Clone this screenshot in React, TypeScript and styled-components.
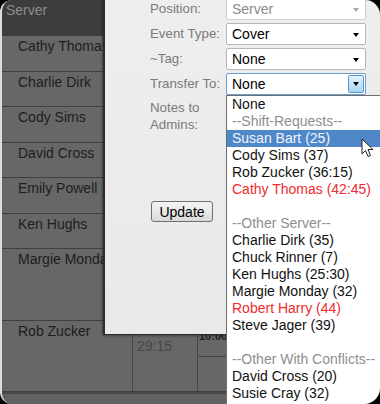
import React from "react";
import styled, { createGlobalStyle } from "styled-components";

const Global = createGlobalStyle`
  html, body { margin: 0; padding: 0; background: #000; }
  body { font-family: "Liberation Sans", Arial, sans-serif; }
  * { box-sizing: border-box; }
`;

const Frame = styled.div`
  position: relative;
  width: 380px;
  height: 404px;
  overflow: hidden;
  border-radius: 12px 15px 16px 12px;
  border-left: 2px solid #dedede;
  background: #676767;
  font-family: "Liberation Sans", Arial, sans-serif;
`;

const Table = styled.div`
  display: flex;
  flex-direction: column;
`;

const HeaderBar = styled.div`
  height: 36px;
  background: #3d3d3d;
  color: #8c8c8c;
  font-size: 14px;
  line-height: 18px;
  padding: 1px 4px;
`;

const Row = styled.div<{ $h: number }>`
  display: grid;
  grid-template-columns: 131px 65px 1fr;
  height: ${(p) => p.$h}px;
  border-bottom: 1px solid #3f3f3f;
`;

const NameCell = styled.div`
  padding: 1px 0 0 16px;
  font-size: 14px;
  line-height: 18px;
  color: #1d1d1d;
  white-space: nowrap;
  overflow: hidden;
  border-right: 1px solid #464646;
`;

const HoursCell = styled.div`
  padding: 16px 0 0 4px;
  font-size: 14px;
  line-height: 18px;
  color: #474747;
  border-right: 1px solid #464646;
`;

const TimesCell = styled.div`
  display: flex;
  flex-direction: column;
`;

const TimeSlot = styled.div`
  flex: 1;
  font-size: 11px;
  font-weight: bold;
  line-height: 13px;
  color: #1f1f1f;
  padding: 9px 0 0 1px;
  border-bottom: 1px solid #464646;
  &:last-child { border-bottom: none; }
`;

const FooterRow = styled.div`
  height: 12px;
  border-top: 2px solid #4a4a4a;
  background: #626262;
`;

const Modal = styled.div`
  position: absolute;
  left: 101px;
  top: 0;
  width: 300px;
  height: 335px;
  background: linear-gradient(180deg, #eeeeee 0%, #e9e9e9 100%);
  border-left: 2px solid #2c2c2c;
  border-bottom: 1px solid #2c2c2c;
  box-shadow: -1px 1px 2px rgba(0, 0, 0, 0.35);
  padding-left: 45px;
`;

const Form = styled.div`
  display: grid;
  grid-template-columns: 76px 140px;
  grid-template-rows: repeat(4, 25px) 101px;
  align-items: center;
  margin-top: -4px;
`;

const Label = styled.div`
  font-size: 13.3px;
  line-height: 17px;
  color: #7a7a7a;
  white-space: nowrap;
`;

const NotesLabel = styled(Label)`
  align-self: start;
  padding-top: 3px;
`;

const NotesArea = styled.div`
  height: 101px;
`;

const SelectBox = styled.div<{ $disabled?: boolean; $focused?: boolean }>`
  position: relative;
  height: 22px;
  background: #fff;
  border: 1px solid
    ${(p) => (p.$focused ? "#6a9fd4" : p.$disabled ? "#d0d0d0" : "#b7b7b7")};
  border-radius: 2px;
  padding-left: 5px;
  font-size: 14px;
  line-height: 20px;
  color: ${(p) => (p.$disabled ? "#8a8a8a" : "#000")};
  display: flex;
  align-items: center;
`;

const Arrow = styled.span<{ $disabled?: boolean }>`
  position: absolute;
  right: 6px;
  top: 9px;
  width: 0;
  height: 0;
  border-left: 3.5px solid transparent;
  border-right: 3.5px solid transparent;
  border-top: 4px solid ${(p) => (p.$disabled ? "#a8a8a8" : "#000")};
`;

const ArrowButton = styled.span`
  position: absolute;
  right: 1px;
  top: 1px;
  bottom: 1px;
  width: 16px;
  border: 1px solid #5b94c9;
  border-radius: 2px;
  background: linear-gradient(180deg, #e6f3fc 0%, #c4e3f7 50%, #a9d5f2 100%);
  display: flex;
  align-items: center;
  justify-content: center;
  &::after {
    content: "";
    border-left: 3.5px solid transparent;
    border-right: 3.5px solid transparent;
    border-top: 4px solid #000;
  }
`;

const ButtonRow = styled.div`
  margin-top: 4px;
  padding-left: 1px;
`;

const UpdateButton = styled.button`
  height: 21px;
  width: 62px;
  padding: 0;
  font-family: "Liberation Sans", Arial, sans-serif;
  font-size: 14px;
  color: #000;
  border: 1px solid #707070;
  border-radius: 3px;
  background: linear-gradient(180deg, #f4f4f4 0%, #e9e9e9 50%, #d9d9d9 100%);
`;

const ListBox = styled.div`
  position: absolute;
  left: 224px;
  top: 95px;
  width: 170px;
  height: 330px;
  background: #fff;
  border: 1px solid #6e6e6e;
  display: flex;
  flex-direction: column;
`;

const Option = styled.div<{ $kind?: "group" | "red" | "selected" }>`
  height: 17px;
  line-height: 17px;
  font-size: 14px;
  padding-left: 5px;
  white-space: nowrap;
  color: ${(p) =>
    p.$kind === "group"
      ? "#8e8e8e"
      : p.$kind === "red"
      ? "#ee2b2f"
      : p.$kind === "selected"
      ? "#f2f6fc"
      : "#111"};
  background: ${(p) => (p.$kind === "selected" ? "#4f88c9" : "transparent")};
`;

const Cursor = styled.svg`
  position: absolute;
  left: 359px;
  top: 138px;
`;

type Opt = { t: string; k?: "group" | "red" | "selected" };

const options: Opt[] = [
  { t: "None" },
  { t: "--Shift-Requests--", k: "group" },
  { t: "Susan Bart (25)", k: "selected" },
  { t: "Cody Sims (37)" },
  { t: "Rob Zucker (36:15)" },
  { t: "Cathy Thomas (42:45)", k: "red" },
  { t: "\u00a0" },
  { t: "--Other Server--", k: "group" },
  { t: "Charlie Dirk (35)" },
  { t: "Chuck Rinner (7)" },
  { t: "Ken Hughs (25:30)" },
  { t: "Margie Monday (32)" },
  { t: "Robert Harry (44)", k: "red" },
  { t: "Steve Jager (39)" },
  { t: "\u00a0" },
  { t: "--Other With Conflicts--", k: "group" },
  { t: "David Cross (20)" },
  { t: "Susie Cray (32)" },
];

const rows: { name: string; h: number }[] = [
  { name: "Cathy Thomas", h: 36 },
  { name: "Charlie Dirk", h: 35 },
  { name: "Cody Sims", h: 36 },
  { name: "David Cross", h: 35 },
  { name: "Emily Powell", h: 36 },
  { name: "Ken Hughs", h: 35 },
  { name: "Margie Monday", h: 72 },
];

export default function App() {
  return (
    <>
      <Global />
      <Frame>
        <Table>
          <HeaderBar>Server</HeaderBar>
          {rows.map((r) => (
            <Row key={r.name} $h={r.h}>
              <NameCell>{r.name}</NameCell>
              <HoursCell />
              <TimesCell />
            </Row>
          ))}
          <Row $h={71}>
            <NameCell>Rob Zucker</NameCell>
            <HoursCell>29:15</HoursCell>
            <TimesCell>
              <TimeSlot>10:00</TimeSlot>
              <TimeSlot />
            </TimesCell>
          </Row>
          <FooterRow />
        </Table>

        <Modal>
          <Form>
            <Label>Position:</Label>
            <SelectBox $disabled>
              Server
              <Arrow $disabled />
            </SelectBox>
            <Label>Event Type:</Label>
            <SelectBox>
              Cover
              <Arrow />
            </SelectBox>
            <Label>~Tag:</Label>
            <SelectBox>
              None
              <Arrow />
            </SelectBox>
            <Label>Transfer To:</Label>
            <SelectBox $focused>
              None
              <ArrowButton />
            </SelectBox>
            <NotesLabel>
              Notes to
              <br />
              Admins:
            </NotesLabel>
            <NotesArea />
          </Form>
          <ButtonRow>
            <UpdateButton>Update</UpdateButton>
          </ButtonRow>
        </Modal>

        <ListBox>
          {options.map((o, i) => (
            <Option key={i} $kind={o.k}>
              {o.t}
            </Option>
          ))}
        </ListBox>

        <Cursor width="14" height="21" viewBox="0 0 14 21">
          <path
            d="M1 1 L1 16 L4.5 12.5 L7 18.5 L9.5 17.5 L7 11.5 L12 11.5 Z"
            fill="#fff"
            stroke="#222"
            strokeWidth="1"
            strokeLinejoin="round"
          />
        </Cursor>
      </Frame>
    </>
  );
}
